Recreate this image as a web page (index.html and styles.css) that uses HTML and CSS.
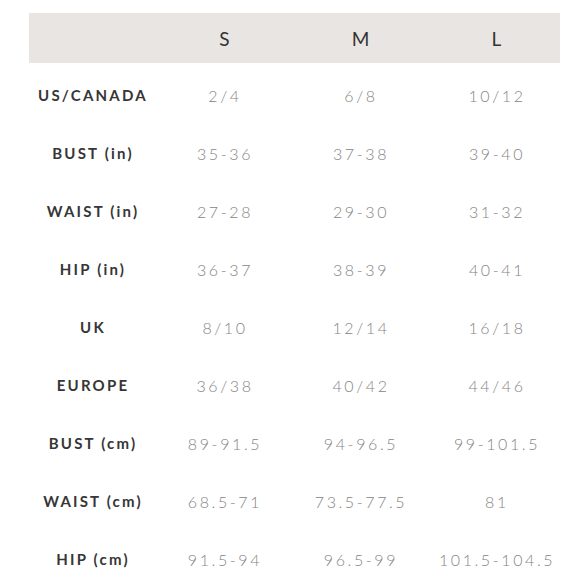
FILE: index.html
```html
<!DOCTYPE html>
<html>
<head>
<meta charset="utf-8">
<link rel="stylesheet" href="styles.css">
</head>
<body>
<div class="chart">
  <div class="row head">
    <div class="cell label"></div>
    <div class="cell size">S</div>
    <div class="cell size">M</div>
    <div class="cell size last">L</div>
  </div>
  <div class="row">
    <div class="cell label">US/CANADA</div>
    <div class="cell val">2/4</div>
    <div class="cell val">6/8</div>
    <div class="cell val last">10/12</div>
  </div>
  <div class="row">
    <div class="cell label">BUST (in)</div>
    <div class="cell val">35-36</div>
    <div class="cell val">37-38</div>
    <div class="cell val last">39-40</div>
  </div>
  <div class="row">
    <div class="cell label">WAIST (in)</div>
    <div class="cell val">27-28</div>
    <div class="cell val">29-30</div>
    <div class="cell val last">31-32</div>
  </div>
  <div class="row">
    <div class="cell label">HIP (in)</div>
    <div class="cell val">36-37</div>
    <div class="cell val">38-39</div>
    <div class="cell val last">40-41</div>
  </div>
  <div class="row">
    <div class="cell label">UK</div>
    <div class="cell val">8/10</div>
    <div class="cell val">12/14</div>
    <div class="cell val last">16/18</div>
  </div>
  <div class="row">
    <div class="cell label">EUROPE</div>
    <div class="cell val">36/38</div>
    <div class="cell val">40/42</div>
    <div class="cell val last">44/46</div>
  </div>
  <div class="row">
    <div class="cell label">BUST (cm)</div>
    <div class="cell val">89-91.5</div>
    <div class="cell val">94-96.5</div>
    <div class="cell val last">99-101.5</div>
  </div>
  <div class="row">
    <div class="cell label">WAIST (cm)</div>
    <div class="cell val">68.5-71</div>
    <div class="cell val">73.5-77.5</div>
    <div class="cell val last">81</div>
  </div>
  <div class="row">
    <div class="cell label">HIP (cm)</div>
    <div class="cell val">91.5-94</div>
    <div class="cell val">96.5-99</div>
    <div class="cell val last">101.5-104.5</div>
  </div>
</div>
</body>
</html>
```
FILE: styles.css
```css
html, body {
  margin: 0;
  padding: 0;
  background: #ffffff;
}
body {
  font-family: Lato, "Noto Sans", sans-serif;
}
.chart {
  width: 531px;
  margin: 13px 0 0 29px;
}
.row {
  display: grid;
  grid-template-columns: 128px 136px 136px 131px;
  height: 58px;
  align-items: center;
}
.row.head {
  height: 50px;
  background: #e9e5e2;
  margin-bottom: 3px;
}
.cell {
  text-align: center;
  white-space: nowrap;
}
.cell.last {
  padding-left: 5px;
}
.size {
  font-size: 19px;
  color: #333333;
  letter-spacing: 1px;
}
.label {
  font-size: 15px;
  font-weight: 700;
  color: #363636;
  letter-spacing: 2.2px;
}
.val {
  font-size: 16px;
  font-weight: 300;
  color: #858585;
  letter-spacing: 2.6px;
}
```
